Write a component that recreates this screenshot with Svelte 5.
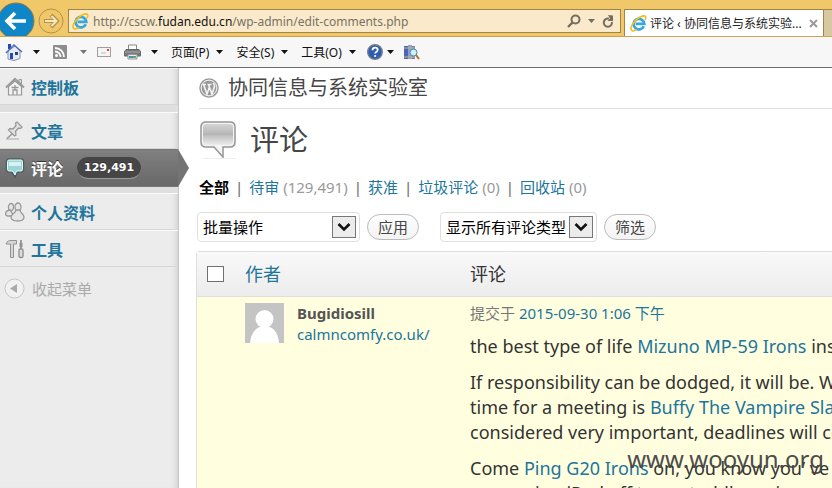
<script>
  const tools = ['页面(P)', '安全(S)', '工具(O)'];
  const filters = [
    { name: '待审', count: '(129,491)' },
    { name: '获准', count: '' },
    { name: '垃圾评论', count: '(0)' },
    { name: '回收站', count: '(0)' }
  ];
</script>

{#snippet ie(size)}
  <svg width={size} height={size} viewBox="0 0 16 16" aria-hidden="true">
    <path d="M13 10.600A5 5 0 1 1 13.400 8.300H5.400" fill="none" stroke="#35a7e0" stroke-width="2.600" />
    <path d="M1.800 14.800C-1 12.500 4 4.500 9.500 1.900c3-1.500 5.400-1.400 5.400.4 0 .9-.3 1.700-.9 2.500" fill="none" stroke="#f2bc1c" stroke-width="1.500" />
    <path d="M1.800 14.800c1.200.6 3-.1 4.500-1.200" fill="none" stroke="#f2bc1c" stroke-width="1.500" />
  </svg>
{/snippet}

{#snippet caret(dim)}
  <svg class="caret" class:dim width="7" height="4" viewBox="0 0 7 4" aria-hidden="true"><path d="M0 0h7L3.500 4z" fill="currentColor" /></svg>
{/snippet}

<div class="window">
  <header class="chrome">
    <button class="back" aria-label="后退">
      <svg width="35" height="36" viewBox="0 0 35 36"><circle cx="16" cy="21" r="18" fill="#0f86c8" stroke="#8a7a4c" /><path d="M7 21h19M15 13l-8 8 8 8" fill="none" stroke="#fff" stroke-width="3.600" /></svg>
    </button>
    <button class="forward" aria-label="前进">
      <svg width="26" height="26" viewBox="0 0 26 26"><circle cx="13" cy="13" r="12" fill="none" stroke="#b3924a" /><path d="M6 13h13M13 7l6 6-6 6" fill="none" stroke="#b3924a" stroke-width="4" /><path d="M7 13h11M13.500 8l5 5-5 5" fill="none" stroke="#fae7c0" stroke-width="2" /></svg>
    </button>
    <div class="address">
      {@render ie(17)}
      <span class="url">http://cscw.<b>fudan.edu.cn</b>/wp-admin/edit-comments.php</span>
      <svg width="14" height="14" viewBox="0 0 14 14"><circle cx="8.500" cy="5.500" r="4" fill="none" stroke="#756d5d" stroke-width="2" /><path d="M5.500 8.500L1 13" stroke="#756d5d" stroke-width="2.400" /></svg>
      <svg width="7" height="4" viewBox="0 0 7 4"><path d="M0 0h7L3.500 4z" fill="#756d5d" /></svg>
      <svg width="12" height="13" viewBox="0 0 12 13"><path d="M7 3.700A4.100 4.100 0 1 0 9.900 7" fill="none" stroke="#756d5d" stroke-width="2" /><path d="M6 0l5 .5V6H5.500L8 3.500z" fill="#756d5d" /></svg>
    </div>
    <div class="tab">
      {@render ie(17)}
      <span>评论 ‹ 协同信息与系统实验...</span>
      <svg width="9" height="9" viewBox="0 0 9 9"><path d="M1 1l7 7M8 1L1 8" stroke="#9b9b9b" stroke-width="2" /></svg>
    </div>
    <div class="newtab"></div>
  </header>

  <nav class="toolbar">
    <svg width="18" height="18" viewBox="0 0 18 18"><path d="M3 1h3v5H3z" fill="#2846b8" /><path d="M3 8v8l6 1.500 6-2V8L10 3z" fill="#e6eaf5" stroke="#8292b5" /><path d="M1 10L9 2l8 7" fill="none" stroke="#4c70be" stroke-width="1.600" /><path d="M5 10h3v6H5z" fill="#244bb4" /><path d="M10 9h3v3h-3z" fill="#354260" /></svg>
    {@render caret(false)}
    <svg class="gap" width="14" height="14" viewBox="0 0 14 14"><rect width="14" height="14" rx="1" fill="#8d8d8d" /><circle cx="3.500" cy="10.500" r="1.500" fill="#fff" /><path d="M2 6.500a5.500 5.500 0 0 1 5.500 5.500M2 3a9 9 0 0 1 9 9" fill="none" stroke="#fff" stroke-width="1.800" /></svg>
    {@render caret(true)}
    <svg class="mail" width="14" height="10" viewBox="0 0 14 10"><rect x=".5" y=".5" width="13" height="9" fill="#f5f5f5" stroke="#9f9f9f" /><path d="M10 2h2v2h-2z" fill="#d34545" /><path d="M4 6h5" stroke="#bbb" /></svg>
    <svg class="printer" width="17" height="16" viewBox="0 0 17 16"><path d="M4.500 1h8v5h-8z" fill="#fff" stroke="#888" /><path d="M2 5.500h13l1.500 2V12H.5V7.500z" fill="#77797c" stroke="#66686a" /><path d="M1 8h15" stroke="#aaa" /><path d="M4 10.500h9V15H4z" fill="#e8eef2" stroke="#999" /><path d="M5 12h4v2H5z" fill="#4191b8" /><path d="M9 12h3v2H9z" fill="#69a957" /></svg>
    {@render caret(false)}
    {#each tools as t}
      <button class="menu">{t}{@render caret(false)}</button>
    {/each}
    <button class="menu help" aria-label="帮助">
      <svg width="16" height="16" viewBox="0 0 16 16"><circle cx="8" cy="8" r="7.300" fill="#2d5cb1" stroke="#777d8b" stroke-width="1.400" /><path d="M5.500 6.200C5.500 2.800 10.700 3 10.700 6c0 1.700-2.500 1.800-2.500 3.600" fill="none" stroke="#fff" stroke-width="1.800" /><circle cx="8.200" cy="12" r="1.100" fill="#fff" /></svg>
      {@render caret(false)}
    </button>
    <svg class="research" width="17" height="17" viewBox="0 0 17 17"><path d="M1 2h4v13H1z" fill="#4866bb" /><path d="M5 1h4v14H5z" fill="#8f9fd0" /><path d="M9 2h3v13H9z" fill="#6f83c4" /><path d="M1 4h11M1 13h11" stroke="#d1b968" /><circle cx="10.500" cy="8.500" r="3.500" fill="#c9f1fa" stroke="#4d8baa" /><path d="M13 11l3 4" stroke="#a77628" stroke-width="2" /></svg>
  </nav>

  <div class="page">
    <aside>
      <a class="item" href="#dash">
        <svg width="20" height="20" viewBox="0 0 20 20"><path d="M14 2.500h2.500V8L14 5.500z" fill="#ddd" stroke="#999" /><path d="M3.500 9.500V18h13V9.500L10 4z" fill="#f3f3f3" stroke="#999" stroke-width="1.200" /><path d="M1 10.500L10 2l9 8.500" fill="none" stroke="#999" stroke-width="2" /><path d="M8 18v-5h4v5M6.500 10.500h7M10 8v5" fill="none" stroke="#999" stroke-width="1.300" /></svg>
        控制板
      </a>
      <div class="sep"></div>
      <a class="item" href="#posts">
        <svg width="20" height="20" viewBox="0 0 20 20"><path d="M1 18h13" stroke="#ccc" stroke-width="2" /><path d="M8 12l-6 5.500" stroke="#999" stroke-width="1.600" /><path d="M10.500 2l1.500-1 5 5-1.500 1.500-2-.5-3 3.500.5 3.500-1.500 1-6-6 1.500-1.500 3 .5 3-3.500z" fill="#e2e2e2" stroke="#999" stroke-width="1.300" /></svg>
        文章
      </a>
      <a class="item current" href="#comments">
        <svg width="20" height="20" viewBox="0 0 20 20"><path d="M4 1.500h12q2 0 2 2v8q0 2-2 2h-4l-2 5-3-5H4q-2 0-2-2v-8q0-2 2-2z" fill="#8fcfcf" stroke="#475f60" stroke-width="2.400" /><path d="M4 2h12q1.500 0 1.500 1.500v8q0 1.500-1.500 1.500h-4.500L10 17l-2.500-4H4q-1.500 0-1.500-1.500v-8Q2.500 2 4 2z" fill="#9ad6d6" stroke="#eefafa" /><path d="M4 4h12v4H4z" fill="#d7f1f1" /></svg>
        评论 <span class="badge">129,491</span>
        <svg class="arrow" width="12" height="38" viewBox="0 0 12 38"><path d="M0 0l11 19L0 38z" fill="#747474" /></svg>
      </a>
      <div class="sep"></div>
      <a class="item" href="#profile">
        <svg width="20" height="20" viewBox="0 0 20 20"><g fill="#e6e6e6" stroke="#999" stroke-width="1.300"><ellipse cx="6" cy="5" rx="2.500" ry="3.500" /><path d="M5 8c-6 1-5 6-2 6h6z" /><ellipse cx="13" cy="5" rx="3" ry="4" /><path d="M11 8c0 3-5 4-5 7s3 4 7 4 6-1 6-4-4-4-4-7z" /></g></svg>
        个人资料
      </a>
      <a class="item" href="#tools">
        <svg width="20" height="20" viewBox="0 0 20 20"><path d="M1 5c1-3 3-3.500 5-3.500h5.500V5H8.500v13.500h-3V5z" fill="#d5d5d5" stroke="#929292" /><path d="M16 1v9" stroke="#929292" stroke-width="1.800" /><path d="M16 4v4" stroke="#929292" stroke-width="3" /><rect x="14" y="10" width="4" height="8.500" rx="1.500" fill="#ddd" stroke="#929292" stroke-width="1.400" /></svg>
        工具
      </a>
      <button class="collapse">
        <svg width="21" height="21" viewBox="0 0 21 21"><circle cx="10.500" cy="10.500" r="9.500" fill="#f1f1f1" stroke="#c6c6c6" /><path d="M13 6v9l-7-4.500z" fill="#aaa" /></svg>
        收起菜单
      </button>
    </aside>

    <main>
      <div class="site">
        <svg width="20" height="20" viewBox="0 0 20 20"><circle cx="10" cy="10" r="8" fill="#999" /><circle cx="10" cy="10" r="9" fill="none" stroke="#999" stroke-width="1.500" /><circle cx="10" cy="10" r="7.800" fill="none" stroke="#eee" /><path d="M3.500 6.500h3.500M8.500 6.500h4M4.500 6.500l3.500 9.500L10.500 9M9.500 6.500L13 16l2.500-7.500q0-2-1.500-3.500" fill="none" stroke="#f4f4f4" stroke-width="1.600" /></svg>
        <h1>协同信息与系统实验室</h1>
      </div>
      <div class="heading">
        <svg width="38" height="40" viewBox="0 0 38 40">
          <defs><linearGradient id="g" x2="0" y2="1"><stop stop-color="#d5d5d5" /><stop offset=".5" stop-color="#b5b5b5" /><stop offset=".6" stop-color="#c5c5c5" /><stop offset="1" stop-color="#ededed" /></linearGradient></defs>
          <path d="M7 2h24q5 0 5 5v15q0 5-5 5h-7v10l-9-10H7q-5 0-5-5V7q0-5 5-5z" fill="#f4f4f4" stroke="#959595" stroke-width="1.500" /><rect x="4" y="4" width="30" height="21" rx="3" fill="url(#g)" /><path d="M3 38.500h34" stroke="#eee" />
        </svg>
        <h2>评论</h2>
      </div>
      <div class="filters">
        <strong>全部</strong>
        {#each filters as f}
          <i>|</i><span><a href="#filter">{f.name}</a>{#if f.count}&nbsp;<em>{f.count}</em>{/if}</span>
        {/each}
      </div>
      <div class="actions">
        <div class="select bulk">
          <select aria-label="批量操作"><option>批量操作</option></select>
          <svg width="24" height="22" viewBox="0 0 24 22"><rect x=".5" y=".5" width="23" height="21" fill="#ececec" stroke="#777" /><path d="M6.500 8l5.500 5.500L17.500 8" fill="none" stroke="#111" stroke-width="2.600" /></svg>
        </div>
        <button class="pill">应用</button>
        <div class="select type">
          <select aria-label="评论类型"><option>显示所有评论类型</option></select>
          <svg width="24" height="22" viewBox="0 0 24 22"><rect x=".5" y=".5" width="23" height="21" fill="#ececec" stroke="#777" /><path d="M6.500 8l5.500 5.500L17.500 8" fill="none" stroke="#111" stroke-width="2.600" /></svg>
        </div>
        <button class="pill">筛选</button>
      </div>
      <table>
        <thead>
          <tr>
            <th class="check"><input type="checkbox" aria-label="全选" /></th>
            <th class="author"><a href="#author">作者</a></th>
            <th>评论</th>
          </tr>
        </thead>
        <tbody>
          <tr>
            <td></td>
            <td>
              <div class="person">
                <svg width="39" height="40" viewBox="0 0 39 40"><path fill="#c4c4c4" d="M0 0h39v40H0z" /><circle cx="19.500" cy="16" r="9" fill="#fff" /><path d="M5 40c1-10 6-15 10-16h9c5 1 9 6 10 16z" fill="#fff" /></svg>
                <div><strong>Bugidiosill</strong><a href="#site">calmncomfy.co.uk/</a></div>
              </div>
            </td>
            <td class="comment">
              <div class="date">提交于 <a href="#date">2015-09-30 1:06 下午</a></div>
              <p>the best type of life <a href="#a">Mizuno MP-59 Irons</a> instead</p>
              <p>If responsibility can be dodged, it will be. When the<br />time for a meeting is <a href="#b">Buffy The Vampire Slayer</a><br />considered very important, deadlines will come</p>
              <p>Come <a href="#c">Ping G20 Irons</a> on, you know you’ ve<br />comparing iPod off to my toddler using and</p>
            </td>
          </tr>
        </tbody>
      </table>
    </main>
  </div>
  <div class="watermark">www.wooyun.org</div>
</div>

<style>
  :global(body) { margin: 0; overflow: hidden; }
  * { box-sizing: border-box; }
  svg { flex: none; display: block; }
  button { border: 0; background: none; padding: 0; font: inherit; color: inherit; }
  a { color: #21759b; text-decoration: none; }
  h1, h2, p { margin: 0; font-weight: 400; }
  .window { position: relative; height: 100vh; overflow: hidden; display: flex; flex-direction: column; font-family: "Noto Sans", "Noto Sans CJK SC", sans-serif; font-size: 15px; background: #fff; }
  .chrome { flex: none; display: flex; align-items: flex-end; height: 37px; background: #f0c869; border-bottom: 1px solid #c9a452; }
  .back { width: 36px; }
  .forward { width: 26px; margin: 0 4px 2px 2px; }
  .address { flex: 1; display: flex; align-items: center; height: 24px; margin: 0 3px 3px 0; padding: 0 6px 0 3px; gap: 7px; border: 1px solid #a38543; background: #faeacb; color: #777265; font-size: 12px; white-space: nowrap; }
  .url { flex: 1; margin-left: -3px; }
  .url b { font-weight: 400; color: #111; }
  .tab { display: flex; align-items: center; width: 200px; height: 27px; padding: 0 5px; gap: 3px; background: #fff; border: 1px solid #a38543; border-bottom: 0; font-size: 12px; white-space: nowrap; color: #222; }
  .tab span { flex: 1; overflow: hidden; }
  .newtab { width: 8px; height: 27px; background: #d8c8a1; border-top: 1px solid #a38543; }
  .toolbar { flex: none; display: flex; align-items: center; height: 31px; padding-left: 5px; background: #f7f7f7; border-bottom: 1px solid #6d6d6d; font-size: 12px; color: #111; }
  .caret { margin-left: 10px; }
  .caret.dim { color: #777; margin-left: 13px; }
  .gap { margin-left: 13px; }
  .mail { margin-left: 10px; }
  .printer { margin-left: 13px; }
  .menu { display: flex; align-items: center; margin-left: 13px; white-space: nowrap; }
  .menu .caret { margin-left: 7px; }
  .help { margin-left: 11px; }
  .help .caret { margin-left: 4px; }
  .research { margin-left: 9px; }
  .page { flex: 1; display: flex; min-height: 0; }
  aside { flex: none; width: 179px; background: #ececec; border-right: 1px solid #c6c6c6; box-shadow: inset -6px 0 6px -5px #c9c9c9; }
  .item { position: relative; display: flex; align-items: center; gap: 6px; height: 37px; padding-left: 5px; font-size: 16px; font-weight: 700; border-top: 1px solid #fafafa; border-bottom: 1px solid #d6d6d6; white-space: nowrap; }
  .sep { height: 7px; background: #dfdfdf; }
  .current { height: 38px; color: #fff; background: linear-gradient(#808080, #686868); border-color: #777; text-shadow: 0 -1px 0 #333; }
  .current + .sep { height: 6px; }
  .badge { margin-left: 8px; padding: 0 7px; height: 22px; line-height: 21px; border-radius: 11px; background: #464646; border-bottom: 1px solid #999; font-family: "DejaVu Sans", sans-serif; font-size: 11px; }
  .arrow { position: absolute; left: 178px; top: -1px; }
  .collapse { display: flex; align-items: center; gap: 7px; padding-left: 4px; height: 42px; color: #aaa; white-space: nowrap; }
  main { flex: 1; min-width: 0; padding-left: 17px; overflow: hidden; white-space: nowrap; }
  .site { display: flex; align-items: center; gap: 9px; height: 41px; margin-left: 3px; border-bottom: 1px solid #dfdfdf; color: #464646; }
  h1 { font-size: 20px; line-height: 40px; }
  .heading { display: flex; align-items: center; gap: 13px; height: 62px; margin-left: 3px; color: #464646; }
  h2 { font-size: 29px; line-height: 40px; }
  .filters { display: flex; align-items: center; gap: 6px; height: 33px; margin-left: 3px; line-height: 33px; }
  .filters i { font-style: normal; color: #666; }
  .filters em { font-style: normal; color: #999; }
  .actions { display: flex; align-items: center; height: 30px; margin: 8px 0 9px 1px; }
  .select { position: relative; height: 30px; border: 1px solid #dfdfdf; border-radius: 4px; }
  .select svg { position: absolute; right: 3px; top: 3px; pointer-events: none; }
  select { appearance: none; width: 100%; height: 28px; padding: 0 5px; border: 0; background: none; font: inherit; color: #000; }
  .bulk { width: 163px; margin-right: 7px; }
  .type { width: 157px; margin: 0 7px 0 21px; }
  .pill { width: 52px; height: 26px; border: 1px solid #bbb; border-radius: 13px; background: linear-gradient(#fefefe, #f3f3f3); color: #464646; line-height: 22px; }
  table { width: 100%; table-layout: fixed; border-collapse: separate; border-spacing: 0; border: 1px solid #dfdfdf; border-right: 0; border-radius: 4px 0 0 0; }
  th { height: 45px; padding: 0 8px 2px; text-align: left; font-size: 18px; font-weight: 400; color: #333; background: linear-gradient(#f9f9f9, #ececec); border-bottom: 1px solid #dfdfdf; }
  th.check { width: 40px; padding: 0 0 0 10px; }
  th.author { width: 225px; }
  input { appearance: none; display: block; width: 17px; height: 16px; margin: 0; border: 1px solid #707070; background: #fff; }
  td { padding: 6px 8px; vertical-align: top; background: #ffffe0; }
  .person { display: flex; gap: 13px; line-height: 21px; }
  .person strong, .person a { display: block; }
  .person strong { color: #555; }
  .comment { color: #333; font-size: 18px; line-height: 25px; }
  .date { font-size: 15px; line-height: 20px; color: #777; }
  p { margin-top: 11px; }
  .watermark { position: absolute; right: 8px; bottom: 14px; font-size: 24px; line-height: 30px; color: #444; opacity: .95; }
</style>
